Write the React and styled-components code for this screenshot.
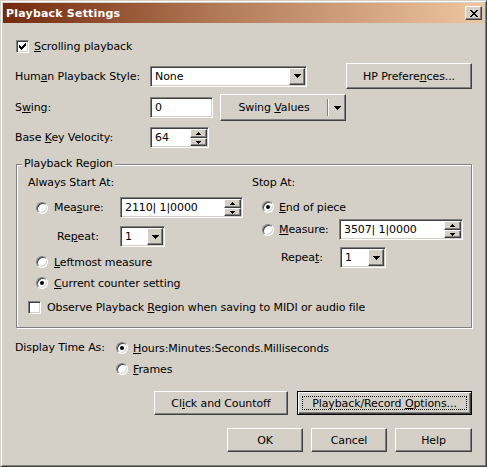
import styled, { createGlobalStyle, css } from "styled-components";

const GlobalStyle = createGlobalStyle`
  html, body { margin: 0; padding: 0; background: #d4d0c8; }
  body {
    font-family: "DejaVu Sans", "Liberation Sans", sans-serif;
    font-size: 11px;
    letter-spacing: -0.1px;
    color: #000;
  }
  * { box-sizing: border-box; }
`;

// classic 3d edges
const raised = css`
  border: 1px solid;
  border-color: #fff #404040 #404040 #fff;
  box-shadow: inset -1px -1px #808080, inset 1px 1px #d4d0c8;
  background: #d4d0c8;
`;

const sunken = css`
  border: 1px solid;
  border-color: #808080 #fff #fff #808080;
  box-shadow: inset 1px 1px #404040, inset -1px -1px #d4d0c8;
  background: #fff;
`;

function DownArrow() {
  return (
    <svg width="7" height="4" viewBox="0 0 7 4" shapeRendering="crispEdges">
      <path d="M0 0h7v1H0z M1 1h5v1H1z M2 2h3v1H2z M3 3h1v1H3z" fill="#000" />
    </svg>
  );
}

function SmallArrow({ up }) {
  const d = up
    ? "M2 0h1v1H2z M1 1h3v1H1z M0 2h5v1H0z"
    : "M0 0h5v1H0z M1 1h3v1H1z M2 2h1v1H2z";
  return (
    <svg width="5" height="3" viewBox="0 0 5 3" shapeRendering="crispEdges">
      <path d={d} fill="#000" />
    </svg>
  );
}

function CheckMark() {
  return (
    <svg width="7" height="7" viewBox="0 0 7 7" shapeRendering="crispEdges">
      <path
        d="M6 0h1v3H6z M5 1h1v3H5z M4 2h1v3H4z M3 3h1v3H3z M2 4h1v3H2z M1 3h1v3H1z M0 2h1v3H0z"
        fill="#000"
      />
    </svg>
  );
}

function CloseGlyph() {
  return (
    <svg width="8" height="7" viewBox="0 0 8 7" shapeRendering="crispEdges">
      <path
        d="M0 0h2v1H0z M6 0h2v1H6z M1 1h2v1H1z M5 1h2v1H5z M2 2h4v1H2z M3 3h2v1H3z M2 4h4v1H2z M1 5h2v1H1z M5 5h2v1H5z M0 6h2v1H0z M6 6h2v1H6z"
        fill="#000"
      />
    </svg>
  );
}

export default function App() {
  return (
    <>
      <GlobalStyle />
      <Window>
        <TitleBar>
          <TitleText>Playback Settings</TitleText>
          <CloseButton aria-label="Close">
            <CloseGlyph />
          </CloseButton>
        </TitleBar>

        <Body>
          <Option $top={16} $left={1}>
            <CheckBox>
              <CheckMark />
            </CheckBox>
            <span>
              <U>S</U>crolling playback
            </span>
          </Option>

          <FieldRow $top={10} $h={26}>
            <FieldLabel $w={135}>
              Hum<U>a</U>n Playback Style:
            </FieldLabel>
            <ComboBox $w={157}>
              <FieldText>None</FieldText>
              <DropButton>
                <DownArrow />
              </DropButton>
            </ComboBox>
            <PushButton $w={126} $h={26} $right>
              <span>
                HP Prefere<U>n</U>ces...
              </span>
            </PushButton>
          </FieldRow>

          <FieldRow $top={5} $h={27}>
            <FieldLabel $w={135}>
              S<U>w</U>ing:
            </FieldLabel>
            <TextField $w={63}>
              <FieldText>0</FieldText>
            </TextField>
            <SplitButton $w={126} $h={27}>
              <SplitText>
                Swing <U>V</U>alues
              </SplitText>
              <SplitDivider />
              <SplitArrow>
                <DownArrow />
              </SplitArrow>
            </SplitButton>
          </FieldRow>

          <FieldRow $top={6} $h={21}>
            <FieldLabel $w={135}>
              Base <U>K</U>ey Velocity:
            </FieldLabel>
            <SpinField $w={59}>
              <FieldText>64</FieldText>
              <SpinButtons>
                <SpinButton $h={9}>
                  <SmallArrow up />
                </SpinButton>
                <SpinButton $h={8}>
                  <SmallArrow />
                </SpinButton>
              </SpinButtons>
            </SpinField>
          </FieldRow>

          <Group>
            <Legend>Playback Region</Legend>
            <GroupGrid>
              <Column>
                <Heading>Always Start At:</Heading>
                <FieldRow $top={7} $left={8} $h={21}>
                  <Option $w={84} $gap={6}>
                    <Radio />
                    <span>
                      Mea<U>s</U>ure:
                    </span>
                  </Option>
                  <SpinField $w={123}>
                    <FieldText>2110| 1|0000</FieldText>
                    <SpinButtons>
                      <SpinButton $h={9}>
                        <SmallArrow up />
                      </SpinButton>
                      <SpinButton $h={8}>
                        <SmallArrow />
                      </SpinButton>
                    </SpinButtons>
                  </SpinField>
                </FieldRow>
                <FieldRow $top={8} $left={29} $h={21}>
                  <FieldLabel $w={63}>
                    Re<U>p</U>eat:
                  </FieldLabel>
                  <ComboBox $w={45}>
                    <FieldText>1</FieldText>
                    <DropButton>
                      <DownArrow />
                    </DropButton>
                  </ComboBox>
                </FieldRow>
                <Option $top={8} $left={8} $gap={6}>
                  <Radio />
                  <span>
                    <U>L</U>eftmost measure
                  </span>
                </Option>
                <Option $top={7} $left={8} $gap={6}>
                  <Radio $on />
                  <span>
                    <U>C</U>urrent counter setting
                  </span>
                </Option>
              </Column>

              <Column>
                <Heading>Stop At:</Heading>
                <Option $top={10} $left={10}>
                  <Radio $on />
                  <span>
                    <U>E</U>nd of piece
                  </span>
                </Option>
                <FieldRow $top={5} $left={10} $h={21}>
                  <Option $w={77}>
                    <Radio />
                    <span>
                      <U>M</U>easure:
                    </span>
                  </Option>
                  <SpinField $w={124}>
                    <FieldText>3507| 1|0000</FieldText>
                    <SpinButtons>
                      <SpinButton $h={9}>
                        <SmallArrow up />
                      </SpinButton>
                      <SpinButton $h={8}>
                        <SmallArrow />
                      </SpinButton>
                    </SpinButtons>
                  </SpinField>
                </FieldRow>
                <FieldRow $top={7} $left={29} $h={21}>
                  <FieldLabel $w={59}>
                    Repea<U>t</U>:
                  </FieldLabel>
                  <ComboBox $w={46}>
                    <FieldText>1</FieldText>
                    <DropButton>
                      <DownArrow />
                    </DropButton>
                  </ComboBox>
                </FieldRow>
              </Column>

              <Option $top={10} $gap={6} $span>
                <CheckBox />
                <span>
                  Observe Playback <U>R</U>egion when saving to MIDI or audio
                  file
                </span>
              </Option>
            </GroupGrid>
          </Group>

          <TimeGrid>
            <Heading>Display Time As:</Heading>
            <TimeOptions>
              <Option>
                <Radio $on />
                <span>
                  <U>H</U>ours:Minutes:Seconds.Milliseconds
                </span>
              </Option>
              <Option>
                <Radio />
                <span>
                  <U>F</U>rames
                </span>
              </Option>
            </TimeOptions>
          </TimeGrid>

          <ButtonRow $top={15} $gap={9}>
            <PushButton $w={134} $h={24}>
              <span>
                Cl<U>i</U>ck and Countoff
              </span>
            </PushButton>
            <PushButton $w={175} $h={24} $default>
              <FocusRing>
                <span>
                  Playback/Record <U>O</U>ptions...
                </span>
              </FocusRing>
            </PushButton>
          </ButtonRow>

          <ButtonRow $top={13} $gap={8}>
            <PushButton $w={76} $h={24}>
              <span>OK</span>
            </PushButton>
            <PushButton $w={76} $h={24}>
              <span>Cancel</span>
            </PushButton>
            <PushButton $w={77} $h={24}>
              <span>Help</span>
            </PushButton>
          </ButtonRow>
        </Body>
      </Window>
    </>
  );
}

// window frame
const Window = styled.div`
  width: 487px;
  height: 467px;
  border: 1px solid;
  border-color: #d4d0c8 #404040 #404040 #d4d0c8;
  box-shadow: inset 1px 1px #fff, inset -1px -1px #808080;
  padding: 2px;
  background: #d4d0c8;
  display: flex;
  flex-direction: column;
  overflow: hidden;
`;

const TitleBar = styled.div`
  height: 20px;
  display: flex;
  align-items: center;
  padding: 0 2px 0 3px;
  background: linear-gradient(to right, #74290d, #b27a58 45%, #eec6a0);
`;

const TitleText = styled.div`
  color: #fff;
  font-weight: bold;
  font-size: 11px;
  letter-spacing: 0.2px;
`;

const CloseButton = styled.button`
  ${raised};
  appearance: none;
  margin-left: auto;
  width: 17px;
  height: 14px;
  padding: 0;
  display: flex;
  align-items: center;
  justify-content: center;
`;

const Body = styled.div`
  display: flex;
  flex-direction: column;
  padding: 0 12px;
`;

const U = styled.span`
  text-decoration: underline;
`;

const FieldRow = styled.div`
  display: flex;
  align-items: center;
  height: ${(p) => p.$h}px;
  margin: ${(p) => p.$top ?? 0}px 0 0 ${(p) => p.$left ?? 0}px;
`;

const FieldLabel = styled.div`
  width: ${(p) => p.$w}px;
  flex: none;
  white-space: nowrap;
`;

const Option = styled.label`
  display: flex;
  align-items: center;
  gap: ${(p) => p.$gap ?? 5}px;
  height: 14px;
  width: ${(p) => (p.$w ? `${p.$w}px` : "auto")};
  flex: none;
  white-space: nowrap;
  margin: ${(p) => p.$top ?? 0}px 0 0 ${(p) => p.$left ?? 0}px;
  ${(p) => p.$span && "grid-column: 1 / -1;"}
`;

const CheckBox = styled.span`
  ${sunken};
  width: 13px;
  height: 13px;
  flex: none;
  display: flex;
  align-items: center;
  justify-content: center;
`;

const Radio = styled.span`
  width: 12px;
  height: 12px;
  flex: none;
  position: relative;
  border-radius: 50%;
  border: 1px solid;
  border-color: #808080 #fff #fff #808080;
  box-shadow: inset 1px 1px #404040, inset -1px -1px #d4d0c8;
  background: #fff;

  &::after {
    content: "";
    display: ${(p) => (p.$on ? "block" : "none")};
    position: absolute;
    left: 3px;
    top: 3px;
    width: 4px;
    height: 4px;
    border-radius: 50%;
    background: #000;
  }
`;

const TextField = styled.div`
  ${sunken};
  width: ${(p) => p.$w}px;
  height: 21px;
  flex: none;
  display: flex;
  align-items: center;
  padding: 1px;
`;

const ComboBox = styled(TextField)``;
const SpinField = styled(TextField)``;

const FieldText = styled.span`
  flex: 1;
  padding-left: 3px;
  white-space: nowrap;
`;

const DropButton = styled.span`
  ${raised};
  width: 16px;
  height: 17px;
  flex: none;
  display: flex;
  align-items: center;
  justify-content: center;
`;

const SpinButtons = styled.span`
  display: flex;
  flex-direction: column;
  width: 17px;
  height: 17px;
  flex: none;
`;

const SpinButton = styled.span`
  ${raised};
  height: ${(p) => p.$h}px;
  display: flex;
  align-items: center;
  justify-content: center;
`;

const PushButton = styled.div.attrs({ role: "button" })`
  ${raised};
  width: ${(p) => p.$w}px;
  height: ${(p) => p.$h}px;
  flex: none;
  color: #000;
  display: flex;
  align-items: center;
  justify-content: center;
  white-space: nowrap;
  cursor: default;
  ${(p) => p.$right && "margin-left: auto;"}
  ${(p) =>
    p.$default &&
    css`
      border-color: #000;
      box-shadow: inset 1px 1px #fff, inset -1px -1px #404040,
        inset -2px -2px #808080;
    `}
`;

const FocusRing = styled.span`
  display: flex;
  align-items: center;
  justify-content: center;
  width: calc(100% - 8px);
  height: calc(100% - 8px);
  border: 1px dotted #000;
`;

const SplitButton = styled(PushButton)`
  margin-left: 7px;
  justify-content: flex-start;
`;

const SplitText = styled.span`
  width: 106px;
  text-align: center;
  flex: none;
`;

const SplitDivider = styled.span`
  width: 2px;
  height: 17px;
  border-left: 1px solid #808080;
  border-right: 1px solid #fff;
  flex: none;
`;

const SplitArrow = styled.span`
  flex: 1;
  display: flex;
  justify-content: center;
`;

const Group = styled.div`
  position: relative;
  margin: 16px 0 0 1px;
  border: 1px solid #808080;
  box-shadow: inset 1px 1px #fff, 1px 1px #fff;
  padding: 11px 0 13px 11px;
`;

const Legend = styled.span`
  position: absolute;
  top: -8px;
  left: 5px;
  padding: 0 2px;
  line-height: 14px;
  background: #d4d0c8;
`;

const GroupGrid = styled.div`
  display: grid;
  grid-template-columns: 224px 1fr;
`;

const Column = styled.div`
  display: flex;
  flex-direction: column;
`;

const Heading = styled.div`
  height: 14px;
  line-height: 14px;
  white-space: nowrap;
`;

const TimeGrid = styled.div`
  display: grid;
  grid-template-columns: 101px auto;
  margin-top: 13px;
`;

const TimeOptions = styled.div`
  display: flex;
  flex-direction: column;
  gap: 7px;
`;

const ButtonRow = styled.div`
  display: flex;
  justify-content: flex-end;
  gap: ${(p) => p.$gap}px;
  margin-top: ${(p) => p.$top}px;
`;
